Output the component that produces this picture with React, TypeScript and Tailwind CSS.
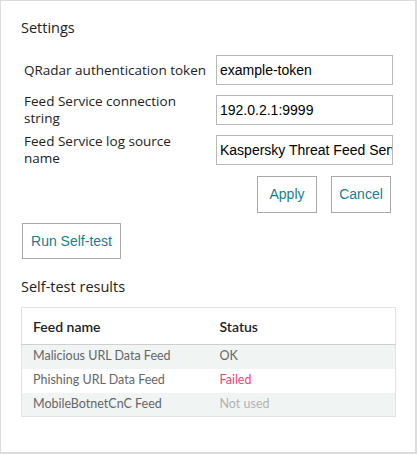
// Settings panel: QRadar / Feed Service connection form and
// the self-test result table underneath.

const labelFont = { fontFamily: '"Open Sans", "Noto Sans", sans-serif' };

type FeedStatus = "ok" | "failed" | "unused";

interface FeedRow {
  name: string;
  status: FeedStatus;
}

const feeds: FeedRow[] = [
  { name: "Malicious URL Data Feed", status: "ok" },
  { name: "Phishing URL Data Feed", status: "failed" },
  { name: "MobileBotnetCnC Feed", status: "unused" },
];

const statusText: Record<FeedStatus, string> = {
  ok: "OK",
  failed: "Failed",
  unused: "Not used",
};

const statusClass: Record<FeedStatus, string> = {
  ok: "text-[#666]",
  failed: "text-[#f0457a]",
  unused: "text-[#b3b3b3]",
};

function Field({ label, value }: { label: string; value: string }) {
  // Fixed 30px row; a two-line label overflows evenly above and
  // below so the inputs keep a steady 40px pitch.
  return (
    <div className="flex h-[30px] items-center">
      <label
        className="w-[195px] shrink-0 pl-[3px] pr-[6px] text-[13.5px] leading-[17px] text-[#222]"
        style={labelFont}
      >
        {label}
      </label>
      <input
        readOnly
        value={value}
        className="h-[30px] w-[177px] shrink-0 border border-[#b9b9b9] bg-white pl-[3px] pr-0 font-['Liberation_Sans',Arial,sans-serif] text-[14px] text-black outline-none"
      />
    </div>
  );
}

function OutlineButton({
  children,
  className = "",
}: {
  children: React.ReactNode;
  className?: string;
}) {
  return (
    <button
      type="button"
      className={
        "border border-[#a9a9a9] bg-white font-['Liberation_Sans',Arial,sans-serif] text-[14px] text-[#17808e] " +
        className
      }
    >
      {children}
    </button>
  );
}

export default function App() {
  return (
    <div className="box-border h-[454px] w-[417px] border-b-2 border-l border-r-2 border-t border-[#dcdcdc] bg-white pl-[20px] pt-[17px]">
      <h2
        className="text-[14.5px] leading-[20px] font-normal text-[#222]"
        style={labelFont}
      >
        Settings
      </h2>

      <div className="mt-[17px] flex w-[372px] flex-col gap-[10px]">
        <Field label="QRadar authentication token" value="example-token" />
        <Field label="Feed Service connection string" value="192.0.2.1:9999" />
        <Field
          label="Feed Service log source name"
          value="Kaspersky Threat Feed Service"
        />
      </div>

      <div className="mt-[11px] flex w-[372px] justify-end gap-[14px] pr-[2px]">
        <OutlineButton className="h-[37px] w-[60px]">Apply</OutlineButton>
        <OutlineButton className="h-[37px] w-[60px]">Cancel</OutlineButton>
      </div>

      <OutlineButton className="ml-[1px] mt-[10px] h-[36px] w-[99px]">
        Run Self-test
      </OutlineButton>

      <h2
        className="mt-[18px] text-[14.5px] leading-[20px] font-normal text-[#222]"
        style={labelFont}
      >
        Self-test results
      </h2>

      <table className="mt-[10px] w-[375px] border-collapse border border-[#e2e2e2] font-['Lato',sans-serif]">
        <thead>
          <tr className="h-[37px] border-b border-[#cfcfcf]">
            <th className="w-[198px] pl-[11px] text-left text-[14px] font-semibold text-[#222]">
              Feed name
            </th>
            <th className="text-left text-[14px] font-semibold text-[#222]">
              Status
            </th>
          </tr>
        </thead>
        <tbody>
          {feeds.map((f, i) => (
            <tr
              key={f.name}
              className={
                "h-[24px] " + (i % 2 === 0 ? "bg-[#f0f4f3]" : "bg-white")
              }
            >
              <td className="pl-[11px] text-[12.5px] text-[#666]">{f.name}</td>
              <td className={"text-[12.5px] " + statusClass[f.status]}>
                {statusText[f.status]}
              </td>
            </tr>
          ))}
        </tbody>
      </table>
    </div>
  );
}
